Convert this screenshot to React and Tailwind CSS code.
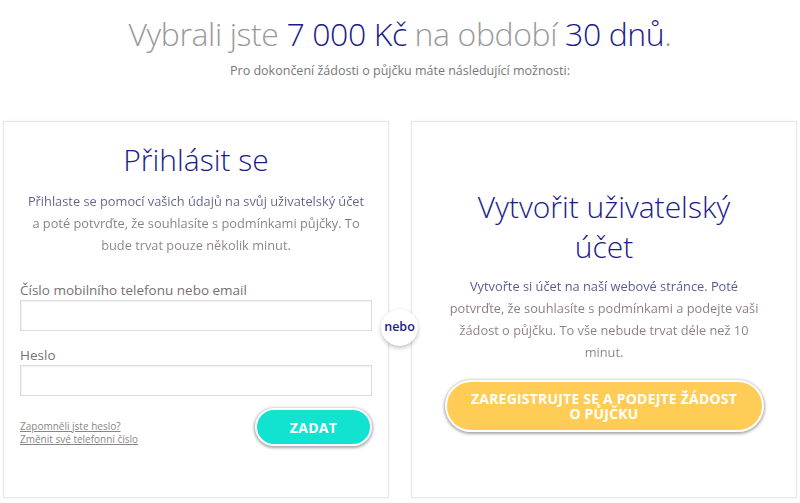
import React from "react";

const font = { fontFamily: '"Open Sans", "Noto Sans", sans-serif' };

export default function App() {
  const para =
    "bg-gradient-to-b from-[#3f3f9a] from-5% via-[#857a7a] via-30% to-[#8d8585] bg-clip-text text-transparent";
  return (
    <div className="w-[800px] h-[503px] bg-white overflow-hidden" style={font}>
      <div className="pt-[12px] text-center">
        <h1 className="text-[32px] font-light leading-[44px] text-[#9a9a9a] tracking-[-0.4px]">
          Vybrali jste <span className="text-[#1b1b8a]">7 000 Kč</span> na období{" "}
          <span className="text-[#1b1b8a]">30 dnů</span>.
        </h1>
        <p className="mt-[6px] text-[12.5px] leading-[18px] text-[#777]">
          Pro dokončení žádosti o půjčku máte následující možnosti:
        </p>
      </div>

      <div className="relative mt-[41px] grid grid-cols-2 gap-[22px] px-[3px]">
        {/* left card */}
        <div className="h-[377px] border border-[#e6e6e6] shadow-[0_0_3px_rgba(0,0,0,0.06)] bg-white">
          <h2 className="mt-[18px] text-center text-[30px] font-light leading-[40px] text-[#1b1b8a]">
            Přihlásit se
          </h2>
          <p className={`mt-[10px] px-[22px] text-center text-[12.8px] leading-[22px] ${para}`}>
            Přihlaste se pomocí vašich údajů na svůj uživatelský účet a poté
            potvrďte, že souhlasíte s podmínkami půjčky. To bude trvat pouze
            několik minut.
          </p>
          <div className="mt-[24px] px-[16px]">
            <label className="block text-[13.5px] leading-[20px] text-[#7a7070]">
              Číslo mobilního telefonu nebo email
            </label>
            <div className="h-[31px] border border-[#dcdcdc] shadow-[inset_1px_1px_2px_rgba(0,0,0,0.06)]" />
            <label className="mt-[14px] block text-[13.5px] leading-[20px] text-[#7a7070]">
              Heslo
            </label>
            <div className="h-[31px] border border-[#dcdcdc] shadow-[inset_1px_1px_2px_rgba(0,0,0,0.06)]" />
            <div className="mt-[12px] flex items-start justify-between">
              <div className="mt-[12px] flex flex-col text-[10px] leading-[13px] text-[#8a8585]">
                <a className="underline">Zapomněli jste heslo?</a>
                <a className="underline">Změnit své telefonní číslo</a>
              </div>
              <button className="h-[38px] w-[117px] rounded-full border-2 border-white bg-[#11e3d0] text-[14px] font-bold tracking-[0.3px] text-white shadow-[0_1px_3px_1px_rgba(0,0,0,0.35)]">
                ZADAT
              </button>
            </div>
          </div>
        </div>

        {/* right card */}
        <div className="flex h-[377px] flex-col items-center justify-center border border-[#e6e6e6] shadow-[0_0_3px_rgba(0,0,0,0.06)] bg-white px-[33px]">
          <h2 className="text-center text-[30px] font-light leading-[40px] text-[#1b1b8a]">
            Vytvořit uživatelský
            <br />
            účet
          </h2>
          <p className={`mt-[8px] text-center text-[12.8px] leading-[22px] ${para}`}>
            Vytvořte si účet na naší webové stránce. Poté potvrďte, že souhlasíte
            s podmínkami a podejte vaši žádost o půjčku. To vše nebude trvat déle
            než 10 minut.
          </p>
          <button className="mt-[17px] flex h-[52px] w-[319px] flex-col items-center justify-center rounded-full border-2 border-white bg-[#ffcc55] px-2 text-[14px] font-bold leading-[15px] tracking-[0.2px] text-white shadow-[0_1px_3px_1px_rgba(0,0,0,0.35)]">
            <span>ZAREGISTRUJTE SE A PODEJTE ŽÁDOST</span>
            <span>O PŮJČKU</span>
          </button>
        </div>

        <div className="absolute left-[381px] top-[188px] flex h-[37px] w-[37px] items-center justify-center rounded-full bg-white shadow-[0_2px_4px_rgba(0,0,0,0.25)]">
          <span className="text-[12.5px] font-semibold text-[#1b1b8a]">nebo</span>
        </div>
      </div>
    </div>
  );
}
